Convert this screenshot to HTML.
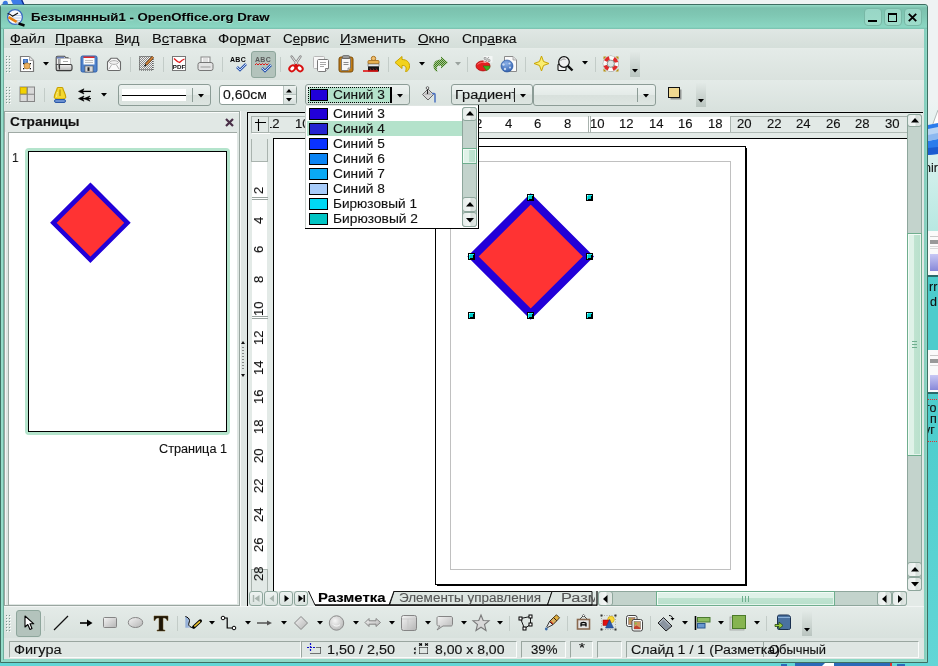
<!DOCTYPE html><html><head><meta charset="utf-8"><style>
*{margin:0;padding:0;box-sizing:border-box}
html,body{width:938px;height:666px;overflow:hidden;background:#eef3f3;font-family:"Liberation Sans",sans-serif}
.a{position:absolute}
.t{position:absolute;white-space:pre;transform-origin:0 0;will-change:transform;-webkit-text-stroke:0.12px currentColor}
u{text-decoration:underline;text-underline-offset:1px}
svg{position:absolute;overflow:visible;will-change:transform}
</style></head><body><div class="a" style="left:0px;top:0px;width:938px;height:666px;background:#eef3f3"></div><div class="a" style="left:0px;top:662px;width:938px;height:4px;background:#62d6d6"></div><div class="a" style="left:928px;top:0px;width:10px;height:666px;background:linear-gradient(#eef3f3 0,#eef3f3 100px,#d6f0ec 160px,#b8e8e2 230px,#5cd4d0 280px,#5ad4d2 666px)"></div><div class="a" style="left:0px;top:4px;width:928px;height:659px;background:#8ed8c6;border:1px solid #3f6e62;border-radius:3px 3px 0 0"></div><div class="a" style="left:1px;top:5px;width:2px;height:657px;background:#94dcc9"></div><div class="a" style="left:3px;top:28px;width:1px;height:632px;background:#6fae9e"></div><div class="a" style="left:924px;top:28px;width:2px;height:632px;background:#86cfbe"></div><div class="a" style="left:1px;top:5px;width:926px;height:24px;background:linear-gradient(#96dbc7 0,#7bc1ae 3px,#7fc7b3 10px,#8ad6c2 22px,#78c0ad 24px);border-radius:3px 3px 0 0"></div><div class="a" style="left:4px;top:29px;width:920px;height:630px;background:#dde5e1"></div><div class="a" style="left:4px;top:29px;width:920px;height:20px;background:linear-gradient(#e0e7e4,#d4ded9)"></div><div class="a" style="left:4px;top:48px;width:920px;height:1px;background:#e6ece9"></div><div class="a" style="left:4px;top:49px;width:920px;height:31px;background:linear-gradient(#e4ebe8,#dae2de)"></div><div class="a" style="left:4px;top:80px;width:920px;height:31px;background:linear-gradient(#e4ebe8,#d8e1dd)"></div><div class="a" style="left:4px;top:111px;width:920px;height:496px;background:#dfe6e3"></div><div class="a" style="left:4px;top:111px;width:236px;height:1px;background:#9aa6a0"></div><div class="a" style="left:4px;top:112px;width:236px;height:1px;background:#fafcfb"></div><div class="a" style="left:4px;top:111px;width:1px;height:495px;background:#9aa6a0"></div><div class="a" style="left:5px;top:112px;width:1px;height:494px;background:#f4f7f6"></div><div class="a" style="left:5px;top:113px;width:234px;height:19px;background:#e1e8e5"></div><div class="a" style="left:8px;top:132px;width:229px;height:1px;background:#a0aaa5"></div><div class="a" style="left:8px;top:132px;width:1px;height:474px;background:#a0aaa5"></div><div class="a" style="left:9px;top:133px;width:228px;height:471px;background:#fff"></div><div class="a" style="left:4px;top:605px;width:236px;height:1px;background:#9aa6a0"></div><div class="a" style="left:239px;top:111px;width:1px;height:496px;background:#9aa6a0"></div><div class="a" style="left:240px;top:111px;width:1px;height:496px;background:#f8faf9"></div><div class="a" style="left:247px;top:112px;width:676px;height:1px;background:#000"></div><div class="a" style="left:247px;top:112px;width:1px;height:495px;background:#000"></div><div class="a" style="left:248px;top:113px;width:675px;height:493px;background:#e3eae7"></div><div class="a" style="left:251px;top:116px;width:18px;height:17px;background:#e2e9e6;border:1px solid #a9b3ae;box-shadow:1px 1px 0 #fff"></div><svg style="left:252px;top:117px;" width="16" height="15" viewBox="0 0 16 15"><path d="M6.5 2V14M3 5.5H14" stroke="#000" stroke-width="1.1"/></svg><div class="a" style="left:269px;top:116px;width:638px;height:17px;background:#e2e9e6;border-top:1px solid #b0bab5;border-bottom:1px solid #fff"></div><div class="a" style="left:450px;top:116px;width:280px;height:1px;background:#e3eae7"></div><div class="a" style="left:450px;top:117px;width:280px;height:15px;background:#fff"></div><div class="a" style="left:730px;top:116px;width:177px;height:17px;background:#e2e9e6;border-top:1px solid #a9b3ae;border-left:1px solid #a9b3ae"></div><div class="a" style="left:269px;top:132px;width:638px;height:1px;background:#b0bab5"></div><div class="a" style="left:252px;top:161px;width:15px;height:408px;background:#fff"></div><div class="a" style="left:251px;top:139px;width:17px;height:23px;background:#e2e9e6;border:1px solid #a9b3ae;border-top:0"></div><div class="a" style="left:273px;top:138px;width:634px;height:1px;background:#000"></div><div class="a" style="left:273px;top:138px;width:1px;height:453px;background:#000"></div><div class="a" style="left:274px;top:139px;width:633px;height:452px;background:#fff"></div><div class="a" style="left:4px;top:606px;width:920px;height:1px;background:#f2f5f4"></div><div class="a" style="left:4px;top:607px;width:920px;height:31px;background:linear-gradient(#e4ebe8,#d8e1dd)"></div><div class="a" style="left:4px;top:638px;width:920px;height:21px;background:#dfe6e3"></div><span class="t" style="left:31px;top:12px;font-size:11.5px;line-height:11.5px;font-weight:700;color:#050505;transform:scaleX(1.1475);text-shadow:0 1px 1px rgba(220,255,245,.55)">Безымянный1 - OpenOffice.org Draw</span><span class="t" style="left:9.8px;top:33px;font-size:12.5px;line-height:12.5px;font-weight:400;color:#0d0d0d;transform:scaleX(1.1388);"><u>Ф</u>айл</span><span class="t" style="left:55.4px;top:33px;font-size:12.5px;line-height:12.5px;font-weight:400;color:#0d0d0d;transform:scaleX(1.1270);"><u>П</u>равка</span><span class="t" style="left:115.2px;top:33px;font-size:12.5px;line-height:12.5px;font-weight:400;color:#0d0d0d;transform:scaleX(1.0785);"><u>В</u>ид</span><span class="t" style="left:151.6px;top:33px;font-size:12.5px;line-height:12.5px;font-weight:400;color:#0d0d0d;transform:scaleX(1.1707);">В<u>с</u>тавка</span><span class="t" style="left:217.9px;top:33px;font-size:12.5px;line-height:12.5px;font-weight:400;color:#0d0d0d;transform:scaleX(1.1868);">Фо<u>р</u>мат</span><span class="t" style="left:282.7px;top:33px;font-size:12.5px;line-height:12.5px;font-weight:400;color:#0d0d0d;transform:scaleX(1.0791);">С<u>е</u>рвис</span><span class="t" style="left:340.2px;top:33px;font-size:12.5px;line-height:12.5px;font-weight:400;color:#0d0d0d;transform:scaleX(1.1704);"><u>И</u>зменить</span><span class="t" style="left:418.0px;top:33px;font-size:12.5px;line-height:12.5px;font-weight:400;color:#0d0d0d;transform:scaleX(1.0879);"><u>О</u>кно</span><span class="t" style="left:461.9px;top:33px;font-size:12.5px;line-height:12.5px;font-weight:400;color:#0d0d0d;transform:scaleX(1.1112);">Спр<u>а</u>вка</span><svg style="left:6px;top:8px;" width="18" height="18" viewBox="0 0 18 18"><circle cx="9" cy="9" r="7.4" fill="#f6f9fd" stroke="#3b6cc2" stroke-width="1.3"/>
<path d="M5 7.5H15M5 10H15M6 12.5H14" stroke="#b8cde8" stroke-width="1"/>
<path d="M1.6 5.5C3.5 5.5 5 6.8 6.5 8.2L12 5" stroke="#111" fill="none" stroke-width="1.1"/>
<path d="M2.5 9.2L11 14.2" stroke="#e8820e" stroke-width="2.6"/>
<path d="M10.5 14L13 15.5" stroke="#d0d0d0" stroke-width="2.6"/>
<path d="M12.5 15.6L18.5 17.4" stroke="#050505" stroke-width="2.6"/></svg><div class="a" style="left:863.5px;top:8px;width:18px;height:18px;background:linear-gradient(#98d6c6,#9edcca);border:1px solid #78b8a6;border-radius:4px"></div><div class="a" style="left:883.5px;top:8px;width:18px;height:18px;background:linear-gradient(#98d6c6,#9edcca);border:1px solid #78b8a6;border-radius:4px"></div><div class="a" style="left:903.5px;top:8px;width:18px;height:18px;background:linear-gradient(#98d6c6,#9edcca);border:1px solid #78b8a6;border-radius:4px"></div><div class="a" style="left:868px;top:20px;width:9px;height:2px;background:#000"></div><div class="a" style="left:888px;top:13px;width:9px;height:9px;border:1px solid #000;border-top-width:2px"></div><svg style="left:908px;top:13px;" width="9" height="9" viewBox="0 0 9 9"><path d="M0.8 0.8L8.2 8.2M8.2 0.8L0.8 8.2" stroke="#000" stroke-width="1.9"/></svg><div class="a" style="left:6px;top:56px;width:1px;height:1px;background:#7d958d"></div><div class="a" style="left:7px;top:57px;width:1px;height:1px;background:#fbfdfc"></div><div class="a" style="left:9px;top:56px;width:1px;height:1px;background:#7d958d"></div><div class="a" style="left:10px;top:57px;width:1px;height:1px;background:#fbfdfc"></div><div class="a" style="left:6px;top:59px;width:1px;height:1px;background:#7d958d"></div><div class="a" style="left:7px;top:60px;width:1px;height:1px;background:#fbfdfc"></div><div class="a" style="left:9px;top:59px;width:1px;height:1px;background:#7d958d"></div><div class="a" style="left:10px;top:60px;width:1px;height:1px;background:#fbfdfc"></div><div class="a" style="left:6px;top:62px;width:1px;height:1px;background:#7d958d"></div><div class="a" style="left:7px;top:63px;width:1px;height:1px;background:#fbfdfc"></div><div class="a" style="left:9px;top:62px;width:1px;height:1px;background:#7d958d"></div><div class="a" style="left:10px;top:63px;width:1px;height:1px;background:#fbfdfc"></div><div class="a" style="left:6px;top:65px;width:1px;height:1px;background:#7d958d"></div><div class="a" style="left:7px;top:66px;width:1px;height:1px;background:#fbfdfc"></div><div class="a" style="left:9px;top:65px;width:1px;height:1px;background:#7d958d"></div><div class="a" style="left:10px;top:66px;width:1px;height:1px;background:#fbfdfc"></div><div class="a" style="left:6px;top:68px;width:1px;height:1px;background:#7d958d"></div><div class="a" style="left:7px;top:69px;width:1px;height:1px;background:#fbfdfc"></div><div class="a" style="left:9px;top:68px;width:1px;height:1px;background:#7d958d"></div><div class="a" style="left:10px;top:69px;width:1px;height:1px;background:#fbfdfc"></div><div class="a" style="left:6px;top:71px;width:1px;height:1px;background:#7d958d"></div><div class="a" style="left:7px;top:72px;width:1px;height:1px;background:#fbfdfc"></div><div class="a" style="left:9px;top:71px;width:1px;height:1px;background:#7d958d"></div><div class="a" style="left:10px;top:72px;width:1px;height:1px;background:#fbfdfc"></div><svg style="left:19px;top:55px;" width="16" height="18" viewBox="0 0 16 18"><path d="M1.5 1.5H10.5L14.5 5.5V16.5H1.5Z" fill="#fff" stroke="#7a7a7a" stroke-width="1.2"/>
<path d="M10.5 1.5V5.5H14.5" fill="#e4e4e4" stroke="#a8a8a8"/>
<rect x="4" y="4" width="5" height="4.7" fill="#3f74c4"/><path d="M5 5.5H8M5 7H8M6.5 4.5V8.5" stroke="#7aa0dc" stroke-width=".6"/>
<circle cx="8" cy="10.9" r="3" fill="#eab060" stroke="#b07820" stroke-width=".7"/>
<rect x="4" y="8" width="1.3" height="1.3" fill="#111"/><rect x="10.7" y="8" width="1.3" height="1.3" fill="#111"/><rect x="4" y="13" width="1.3" height="1.3" fill="#111"/><rect x="10.7" y="13" width="1.3" height="1.3" fill="#111"/></svg><svg style="left:43px;top:62px;" width="6" height="4" viewBox="0 0 6 4"><path d="M0 0H6L3 3.5Z" fill="#000"/></svg><svg style="left:55px;top:55px;" width="18" height="17" viewBox="0 0 18 17"><defs><linearGradient id="gd" x1="0" y1="0" x2="0" y2="1"><stop offset="0" stop-color="#f4f4f4"/><stop offset="1" stop-color="#b4b4b4"/></linearGradient></defs>
<path d="M2.6 1.2H9.5L11 2.8H13V9.5H1.2V2.6C1.2 1.8 1.8 1.2 2.6 1.2Z" fill="#f0f0f0" stroke="#4a4a4a" stroke-width="1.1"/>
<rect x="1.8" y="1.8" width="7.5" height="1.8" fill="#6a80b8"/>
<rect x="3.3" y="4" width="1.3" height="11" fill="#7a7a7a"/>
<rect x="5.5" y="3.5" width="10" height="6" fill="#fff" stroke="#aaa" stroke-width=".6"/><path d="M8 6.5H13" stroke="#aaa"/>
<path d="M1.2 9.5V14.2C1.2 15 1.8 15.6 2.6 15.6H15.5C16.5 15.6 17 15 17 14V11C17 10.2 16.5 9.5 15.5 9.5H4.5V14.5" fill="url(#gd)" stroke="#3a3a3a" stroke-width="1.1"/></svg><svg style="left:80px;top:55px;" width="18" height="18" viewBox="0 0 18 18"><rect x="1" y="1" width="16" height="16" rx="1.5" fill="#4f82cc" stroke="#2f5fa8"/>
<rect x="3.5" y="1.5" width="11" height="1.6" fill="#e02828"/>
<rect x="3.5" y="3" width="11" height="6.5" fill="#fafafa"/>
<path d="M5 5.5H13M5 7.5H13" stroke="#c0c0c0"/>
<rect x="5" y="11" width="8" height="6" fill="#d8d8d8" stroke="#555" stroke-width=".6"/>
<rect x="7.5" y="12.3" width="2" height="3.6" fill="#222"/></svg><svg style="left:106px;top:56px;" width="16" height="16" viewBox="0 0 16 16"><path d="M1.5 6L5 2.3H11L14.5 6V13.3C14.5 14 14 14.5 13.3 14.5H2.7C2 14.5 1.5 14 1.5 13.3Z" fill="#fafafa" stroke="#6a6a6a" stroke-width="1.1"/>
<path d="M3.5 6.5C4.5 4 11.5 4 12.5 6.5C11.5 9 4.5 9 3.5 6.5Z" fill="#f0f0f0" stroke="#9a9a9a" stroke-width=".8"/>
<path d="M3 13L5.5 9M13 13L10.5 9" stroke="#9a9a9a" stroke-width=".8"/></svg><div class="a" style="left:130px;top:57px;width:1px;height:15px;background:#c3ccc8"></div><svg style="left:138px;top:55px;" width="17" height="17" viewBox="0 0 17 17"><defs><pattern id="chk" width="2" height="2" patternUnits="userSpaceOnUse"><rect width="2" height="2" fill="#f0f0f0"/><rect width="1" height="1" fill="#8a8a8a"/><rect x="1" y="1" width="1" height="1" fill="#8a8a8a"/></pattern></defs>
<rect x="1.5" y="1.5" width="13.5" height="13.5" fill="url(#chk)" stroke="#333" stroke-width="1" stroke-dasharray="1 1"/>
<path d="M15 2L8 9.5" stroke="#6a3a10" stroke-width="2.6"/><path d="M15 2L8 9.5" stroke="#d88a40" stroke-width="1.4"/><path d="M8 9.5L6.5 11.2" stroke="#111" stroke-width="1.4"/></svg><div class="a" style="left:163px;top:57px;width:1px;height:15px;background:#c3ccc8"></div><svg style="left:171px;top:55px;" width="16" height="17" viewBox="0 0 16 17"><rect x="1.5" y="1.5" width="13" height="14" fill="#fff" stroke="#777"/>
<path d="M3 3.5C5 5.5 7 7 8.5 7.5C10 6 12 4.5 13.5 4" stroke="#e01818" stroke-width="1.3" fill="none"/>
<text x="8" y="14.2" font-family="Liberation Sans" font-size="6.2" font-weight="700" text-anchor="middle" fill="#111">PDF</text></svg><svg style="left:197px;top:56px;" width="17" height="16" viewBox="0 0 17 16"><rect x="4" y="1" width="9" height="6" fill="#fafafa" stroke="#888"/>
<path d="M6 3H11M6 5H11" stroke="#bbb" stroke-width=".8"/>
<rect x="1" y="6.5" width="15" height="8" rx="2" fill="#e4e4e4" stroke="#777"/>
<path d="M3.5 11H13.5" stroke="#999"/></svg><div class="a" style="left:222px;top:57px;width:1px;height:15px;background:#c3ccc8"></div><svg style="left:229px;top:56px;" width="18" height="16" viewBox="0 0 18 16"><text x="1" y="6.2" font-family="Liberation Sans" font-size="7" font-weight="700" fill="#050505" letter-spacing=".3">ABC</text>
<path d="M8 11L11 14L17 8" stroke="#2d58b0" stroke-width="2.6" fill="none"/><path d="M8 11L11 14L17 8" stroke="#c8d8f4" stroke-width="1" fill="none"/></svg><div class="a" style="left:251px;top:51px;width:25px;height:27px;background:#b3c3bc;border:1px solid #8ea69c;border-radius:3px"></div><svg style="left:254px;top:56px;" width="18" height="17" viewBox="0 0 18 17"><text x="1" y="6.2" font-family="Liberation Sans" font-size="7" font-weight="700" fill="#5a5a5a" letter-spacing=".3">ABC</text>
<path d="M1 9L2.5 7.5L4 9L5.5 7.5L7 9L8.5 7.5L10 9L11.5 7.5L13 9L14.5 7.5" stroke="#e01818" stroke-width="1" fill="none"/>
<path d="M8 12L11 15L17 9" stroke="#2d58b0" stroke-width="2.6" fill="none"/><path d="M8 12L11 15L17 9" stroke="#c8d8f4" stroke-width="1" fill="none"/></svg><div class="a" style="left:280px;top:57px;width:1px;height:15px;background:#c3ccc8"></div><svg style="left:288px;top:55px;" width="16" height="17" viewBox="0 0 16 17"><path d="M3.6 1.5L9.5 9.5M12.5 1.5L7 9.5" stroke="#888" stroke-width="2.4" stroke-linecap="round"/><path d="M3.6 1.5L9.5 9.5M12.5 1.5L7 9.5" stroke="#f4f4f4" stroke-width=".9"/>
<ellipse cx="4.3" cy="13.3" rx="3.3" ry="2.6" fill="#fff" stroke="#d81010" stroke-width="1.9" transform="rotate(-45 4.3 13.3)"/>
<ellipse cx="11.7" cy="13.3" rx="3.3" ry="2.6" fill="#fff" stroke="#d81010" stroke-width="1.9" transform="rotate(45 11.7 13.3)"/>
<circle cx="8" cy="10" r="1.2" fill="#d81010"/></svg><svg style="left:312px;top:55px;" width="18" height="18" viewBox="0 0 18 18"><rect x="1.5" y="1.5" width="11" height="12" rx="1" fill="#f8f8f8" stroke="#b8b8b8"/>
<path d="M6.5 4.5H15.5C16 4.5 16.5 5 16.5 5.5V13.5L13.5 16.5H6.5C6 16.5 5.5 16 5.5 15.5V5.5C5.5 5 6 4.5 6.5 4.5Z" fill="#fff" stroke="#7a7a7a"/>
<path d="M8 7.5H14M8 9.5H14M8 11.5H12" stroke="#a8a8a8"/>
<path d="M13.5 16.5V13.5H16.5" fill="#e8e8e8" stroke="#7a7a7a"/></svg><svg style="left:338px;top:55px;" width="16" height="18" viewBox="0 0 16 18"><rect x="1" y="2" width="14" height="15" rx="2" fill="#c07c14" stroke="#7a4a08" stroke-width="1"/>
<path d="M3.5 3.5H12.5V13L10 15.5H3.5Z" fill="#f6f6f6" stroke="#6a6a6a" stroke-width=".8"/>
<path d="M5.5 7.5H10.5M5.5 9.5H10.5" stroke="#8a8a8a"/>
<path d="M10 15.5V13H12.5" fill="#d8d8d8" stroke="#6a6a6a" stroke-width=".6"/>
<rect x="4.5" y="0.5" width="7" height="3" rx="1.2" fill="#9a9a9a" stroke="#5a5a5a" stroke-width=".7"/></svg><svg style="left:362px;top:55px;" width="18" height="18" viewBox="0 0 18 18"><circle cx="11.5" cy="3.5" r="2.2" fill="#f0c070" stroke="#a87020" stroke-width="1"/>
<rect x="6" y="5.5" width="11" height="3.5" rx="1" fill="#e8b050" stroke="#a87020" stroke-width=".9"/>
<rect x="6" y="9" width="11" height="2.5" fill="#e8e8e8" stroke="#555" stroke-width=".5"/>
<rect x="6" y="11.5" width="11" height="5" fill="#151515"/>
<path d="M1 16H16" stroke="#e01010" stroke-width="1.6"/><path d="M8 13.5L9 15M11 13.5L12 15M14 13.5L15 15" stroke="#c83030" stroke-width=".7"/></svg><div class="a" style="left:388px;top:57px;width:1px;height:15px;background:#c3ccc8"></div><svg style="left:394px;top:55px;" width="18" height="18" viewBox="0 0 18 18"><path d="M1 7.5L8 1.5V4.5C13 4.5 16 7.5 15.5 12C15 15 13 17 11.5 16.5C13 13 12 10 8 10.5V13.5Z" fill="#f2d21c" stroke="#c8a200" stroke-width="1"/></svg><svg style="left:419px;top:62px;" width="6" height="4" viewBox="0 0 6 4"><path d="M0 0H6L3 3.5Z" fill="#000"/></svg><svg style="left:431px;top:55px;" width="18" height="18" viewBox="0 0 18 18"><defs><pattern id="hg" width="2" height="2" patternUnits="userSpaceOnUse"><rect width="2" height="2" fill="#a8c890"/><rect width="1" height="1" fill="#3e7a1e"/><rect x="1" y="1" width="1" height="1" fill="#3e7a1e"/></pattern></defs>
<path d="M17 7.5L10 1.5V4.5C5 4.5 2 7.5 2.5 12C3 15 5 17 6.5 16.5C5 13 6 10 10 10.5V13.5Z" fill="url(#hg)"/></svg><svg style="left:455px;top:62px;" width="6" height="4" viewBox="0 0 6 4"><path d="M0 0H6L3 3.5Z" fill="#9aa29e"/></svg><div class="a" style="left:467px;top:57px;width:1px;height:15px;background:#c3ccc8"></div><svg style="left:474px;top:55px;" width="20" height="18" viewBox="0 0 20 18"><ellipse cx="9" cy="10.9" rx="7" ry="5" fill="#e42020" stroke="#b00808" stroke-width=".8"/>
<path d="M9 10.9L16 10.9C16 13 15 14.5 12.5 15.6Z" fill="#40b020" stroke="#207010" stroke-width=".5"/>
<path d="M3.5 9.5C5 7.5 9 7 12 7.5" stroke="#ff8080" stroke-width=".8" fill="none"/>
<rect x="9.5" y="1" width="9" height="6.5" fill="#fff" opacity=".6"/>
<text x="9.6" y="7.2" font-family="Liberation Sans" font-size="8" font-weight="700" fill="#8a8a8a">%</text></svg><svg style="left:500px;top:55px;" width="18" height="18" viewBox="0 0 18 18"><path d="M4.5 1.5H13L16.5 5V16.5H4.5Z" fill="#fafafa" stroke="#8a8a8a"/>
<path d="M13 1.5V5H16.5" fill="#e0e0e0" stroke="#a0a0a0" stroke-width=".8"/>
<defs><radialGradient id="gl" cx=".45" cy=".3" r=".8"><stop offset="0" stop-color="#8ab0e8"/><stop offset="1" stop-color="#2858a8"/></radialGradient></defs>
<circle cx="7" cy="11" r="6" fill="url(#gl)" stroke="#2050a0" stroke-width=".6"/>
<circle cx="3.5" cy="9.5" r="1.2" fill="#c8daf2"/><circle cx="9.5" cy="8.5" r="1.1" fill="#c8daf2"/><circle cx="10" cy="12.5" r="1" fill="#c8daf2"/><circle cx="5" cy="14" r="1.2" fill="#c8daf2"/></svg><div class="a" style="left:525px;top:57px;width:1px;height:15px;background:#c3ccc8"></div><svg style="left:533px;top:55px;" width="17" height="17" viewBox="0 0 17 17"><path d="M8.5 1L10.5 6.5L16 8.5L10.5 10.5L8.5 16L6.5 10.5L1 8.5L6.5 6.5Z" fill="#fbee70" stroke="#c8a400" stroke-width="1"/></svg><svg style="left:556px;top:55px;" width="20" height="18" viewBox="0 0 20 18"><rect x="2" y="9" width="8" height="6.5" rx="1" fill="#f4f4f4" stroke="#111" stroke-width="1.1"/>
<circle cx="8" cy="7" r="5.3" fill="#f0f0f0" stroke="#111" stroke-width="1.2"/>
<path d="M4.5 6C5.5 4 8 3.5 9.5 4.5" stroke="#999" fill="none"/>
<path d="M11.8 10.8L16.5 15.5" stroke="#111" stroke-width="2.4"/></svg><svg style="left:582px;top:61px;" width="6" height="4" viewBox="0 0 6 4"><path d="M0 0H6L3 3.5Z" fill="#000"/></svg><div class="a" style="left:595px;top:57px;width:1px;height:15px;background:#c3ccc8"></div><svg style="left:602px;top:55px;" width="18" height="18" viewBox="0 0 18 18"><path d="M1.5 1.5H4.5L1.5 4.5Z M16.5 1.5H13.5L16.5 4.5Z M1.5 16.5H4.5L1.5 13.5Z M16.5 16.5H13.5L16.5 13.5Z" fill="#b89010"/>
<circle cx="8.8" cy="8.7" r="7.6" fill="none" stroke="#8a8a8a" stroke-width=".9"/>
<circle cx="8.8" cy="8.7" r="5.7" fill="none" stroke="#fafafa" stroke-width="3.8"/>
<circle cx="8.8" cy="8.7" r="5.7" fill="none" stroke="#e02a2a" stroke-width="3.8" stroke-dasharray="4.48 4.48" stroke-dashoffset="-2.24"/>
<circle cx="8.8" cy="8.7" r="3.6" fill="#dfe6e3" stroke="#7a7a7a" stroke-width=".8"/></svg><div class="a" style="left:630px;top:52px;width:10px;height:25px;background:linear-gradient(#e2e9e6,#b9c4bf)"></div><svg style="left:632px;top:69px;" width="6" height="4" viewBox="0 0 6 4"><path d="M0 0H6L3 3.5Z" fill="#000"/></svg><div class="a" style="left:6px;top:87px;width:1px;height:1px;background:#7d958d"></div><div class="a" style="left:7px;top:88px;width:1px;height:1px;background:#fbfdfc"></div><div class="a" style="left:9px;top:87px;width:1px;height:1px;background:#7d958d"></div><div class="a" style="left:10px;top:88px;width:1px;height:1px;background:#fbfdfc"></div><div class="a" style="left:6px;top:90px;width:1px;height:1px;background:#7d958d"></div><div class="a" style="left:7px;top:91px;width:1px;height:1px;background:#fbfdfc"></div><div class="a" style="left:9px;top:90px;width:1px;height:1px;background:#7d958d"></div><div class="a" style="left:10px;top:91px;width:1px;height:1px;background:#fbfdfc"></div><div class="a" style="left:6px;top:93px;width:1px;height:1px;background:#7d958d"></div><div class="a" style="left:7px;top:94px;width:1px;height:1px;background:#fbfdfc"></div><div class="a" style="left:9px;top:93px;width:1px;height:1px;background:#7d958d"></div><div class="a" style="left:10px;top:94px;width:1px;height:1px;background:#fbfdfc"></div><div class="a" style="left:6px;top:96px;width:1px;height:1px;background:#7d958d"></div><div class="a" style="left:7px;top:97px;width:1px;height:1px;background:#fbfdfc"></div><div class="a" style="left:9px;top:96px;width:1px;height:1px;background:#7d958d"></div><div class="a" style="left:10px;top:97px;width:1px;height:1px;background:#fbfdfc"></div><div class="a" style="left:6px;top:99px;width:1px;height:1px;background:#7d958d"></div><div class="a" style="left:7px;top:100px;width:1px;height:1px;background:#fbfdfc"></div><div class="a" style="left:9px;top:99px;width:1px;height:1px;background:#7d958d"></div><div class="a" style="left:10px;top:100px;width:1px;height:1px;background:#fbfdfc"></div><div class="a" style="left:6px;top:102px;width:1px;height:1px;background:#7d958d"></div><div class="a" style="left:7px;top:103px;width:1px;height:1px;background:#fbfdfc"></div><div class="a" style="left:9px;top:102px;width:1px;height:1px;background:#7d958d"></div><div class="a" style="left:10px;top:103px;width:1px;height:1px;background:#fbfdfc"></div><svg style="left:19px;top:86px;" width="17" height="17" viewBox="0 0 17 17"><rect x="1" y="1" width="14.5" height="14.5" fill="#d9d9d9" stroke="#858585"/>
<rect x="1.5" y="1.5" width="6.5" height="6.5" fill="#f2d200" stroke="#d4b000"/>
<path d="M8.25 1V15.5M1 8.25H15.5" stroke="#858585" stroke-width="1.2"/></svg><div class="a" style="left:44px;top:88px;width:1px;height:14px;background:#c3ccc8"></div><svg style="left:53px;top:86px;" width="15" height="18" viewBox="0 0 15 18"><path d="M5 1.5H9C9.8 1.5 10 2.5 10 3C11 6 13 9 12.8 11.5C12.5 13.5 1.5 13.5 1.2 11.5C1 9 3 6 4 3C4 2.5 4.2 1.5 5 1.5Z" fill="#f4d830" stroke="#c8a000" stroke-width="1.1"/>
<path d="M7 3.5V10" stroke="#a88000" stroke-width="1"/><path d="M4.5 6C4 8 3.5 10 3.5 11" stroke="#fff4a0" stroke-width=".8"/>
<rect x="1.5" y="13.5" width="11" height="3" rx="1.5" fill="#6a90d0" stroke="#2a58a8" stroke-width="1"/></svg><svg style="left:78px;top:88px;" width="14" height="14" viewBox="0 0 14 14"><path d="M3 3.4H13" stroke="#000" stroke-width="1.3"/><path d="M0.5 3.4L6 0.8L4.5 3.4L6 6Z" fill="#000" stroke="#000" stroke-width=".6"/>
<path d="M2 10.6H13" stroke="#000" stroke-width="1.3"/><path d="M0.5 10.6L6 8L4.5 10.6L6 13.2Z M6 10.6L12 8L10 10.6L12 13.2Z" fill="#000" stroke="#000" stroke-width=".6"/></svg><svg style="left:101px;top:93px;" width="6" height="4" viewBox="0 0 6 4"><path d="M0 0H6L3 3.5Z" fill="#000"/></svg><div class="a" style="left:118px;top:84px;width:93px;height:22px;background:linear-gradient(#edf2f0 0,#e4ebe8 48%,#d8e0dc 52%,#dde5e1 100%);border:1px solid #8c9c96;border-radius:3px"></div><div class="a" style="left:122px;top:89px;width:64px;height:12px;background:#fff"></div><div class="a" style="left:122px;top:95px;width:64px;height:1px;background:#000"></div><div class="a" style="left:192px;top:88px;width:1px;height:14px;background:#8c9c96"></div><svg style="left:198px;top:94px;" width="6" height="4" viewBox="0 0 6 4"><path d="M0 0H6L3 3.5Z" fill="#000"/></svg><div class="a" style="left:219px;top:85px;width:78px;height:20px;background:#fff;border:1px solid #8c9c96;border-radius:3px"></div><div class="a" style="left:283px;top:86px;width:13px;height:9px;background:linear-gradient(#eef3f1,#d5dedb);border-left:1px solid #b8c4bf;border-bottom:1px solid #b8c4bf"></div><div class="a" style="left:283px;top:95px;width:13px;height:9px;background:linear-gradient(#eef3f1,#d5dedb);border-left:1px solid #b8c4bf"></div><svg style="left:286px;top:89px;" width="6" height="4" viewBox="0 0 6 4"><path d="M0 3.5H6L3 0Z" fill="#000"/></svg><svg style="left:286px;top:98px;" width="6" height="4" viewBox="0 0 6 4"><path d="M0 0H6L3 3.5Z" fill="#000"/></svg><span class="t" style="left:223px;top:89px;font-size:12.5px;line-height:12.5px;font-weight:400;color:#111;transform:scaleX(1.1228);">0,60см</span><div class="a" style="left:305px;top:84px;width:105px;height:21px;background:linear-gradient(#edf2f0 0,#e4ebe8 48%,#d8e0dc 52%,#dde5e1 100%);border:1px solid #8c9c96;border-radius:3px"></div><div class="a" style="left:308px;top:87px;width:83px;height:16px;background:#b4e2cb;outline:1px dotted #000;outline-offset:-1px"></div><div class="a" style="left:390px;top:87px;width:1.5px;height:16px;background:#000"></div><div class="a" style="left:309.5px;top:89px;width:18.5px;height:12px;background:#2000d8;border:1px solid #000"></div><span class="t" style="left:333px;top:89px;font-size:12.5px;line-height:12.5px;font-weight:400;color:#111;transform:scaleX(1.0991);">Синий 3</span><svg style="left:397px;top:94px;" width="6" height="4" viewBox="0 0 6 4"><path d="M0 0H6L3 3.5Z" fill="#000"/></svg><svg style="left:421px;top:86px;" width="16" height="18" viewBox="0 0 16 18"><path d="M1.5 8.5L7 3L12.5 8.5L7 14Z" fill="#d8d8d8" stroke="#666"/>
<path d="M3 9L7 5L11 9" fill="#b8b8b8"/>
<path d="M6.5 1.5V8" stroke="#222" stroke-width="1"/><circle cx="6.5" cy="2" r="1.3" fill="#fff" stroke="#444" stroke-width=".8"/>
<path d="M11 7.5H13C13.6 7.5 14 8 14 8.5V16.5" stroke="#4a70c0" stroke-width="1.5" fill="none"/></svg><div class="a" style="left:451px;top:84px;width:82px;height:21px;background:linear-gradient(#edf2f0 0,#e4ebe8 48%,#d8e0dc 52%,#dde5e1 100%);border:1px solid #8c9c96;border-radius:3px"></div><div class="a" style="left:452px;top:85px;width:62px;height:19px;overflow:hidden"><div class="a" style="left:-452px;top:-85px;width:938px;height:200px"><span class="t" style="left:455px;top:89px;font-size:12.5px;line-height:12.5px;font-weight:400;color:#111;transform:scaleX(1.1704);">Градиент</span></div></div><div class="a" style="left:514px;top:88px;width:1px;height:14px;background:#222"></div><svg style="left:520px;top:94px;" width="6" height="4" viewBox="0 0 6 4"><path d="M0 0H6L3 3.5Z" fill="#000"/></svg><div class="a" style="left:533px;top:84px;width:123px;height:22px;background:linear-gradient(#edf2f0 0,#e4ebe8 48%,#d8e0dc 52%,#dde5e1 100%);border:1px solid #8c9c96;border-radius:3px"></div><div class="a" style="left:637px;top:88px;width:1px;height:14px;background:#8c9c96"></div><svg style="left:643px;top:94px;" width="6" height="4" viewBox="0 0 6 4"><path d="M0 0H6L3 3.5Z" fill="#000"/></svg><svg style="left:667px;top:86px;" width="16" height="15" viewBox="0 0 16 15"><rect x="3.5" y="3.5" width="11" height="10" fill="#555" opacity=".55"/>
<rect x="1.5" y="1.5" width="11" height="10" fill="#f0d890" stroke="#111"/></svg><div class="a" style="left:696px;top:83px;width:10px;height:24px;background:linear-gradient(#e2e9e6,#b9c4bf)"></div><svg style="left:698px;top:99px;" width="6" height="4" viewBox="0 0 6 4"><path d="M0 0H6L3 3.5Z" fill="#000"/></svg><span class="t" style="left:9.5px;top:116px;font-size:12.5px;line-height:12.5px;font-weight:700;color:#111;transform:scaleX(1.0972);">Страницы</span><svg style="left:225px;top:118px;" width="9" height="9" viewBox="0 0 9 9"><path d="M1 1L8 8M8 1L1 8" stroke="#4a3048" stroke-width="2.2"/></svg><span class="t" style="left:12px;top:152px;font-size:12.5px;line-height:12.5px;font-weight:400;color:#111;transform:scaleX(0.9348);">1</span><div class="a" style="left:25px;top:148px;width:205px;height:287px;border:3px solid #b4e4cc;border-radius:4px"></div><div class="a" style="left:28px;top:151px;width:199px;height:281px;background:#fff;border:1px solid #000"></div><svg style="left:48px;top:180px;" width="85" height="85" viewBox="0 0 85 85"><path d="M42.4 5.75L79.45 42.8L42.4 79.85L5.35 42.8Z" fill="#ff3333" stroke="#2200d8" stroke-width="4.6" stroke-linejoin="miter"/></svg><span class="t" style="left:159px;top:443px;font-size:12px;line-height:12px;font-weight:400;color:#111;transform:scaleX(1.0558);">Страница 1</span><div class="a" style="left:270px;top:0;width:637px;height:140px;overflow:hidden"><div class="a" style="left:-270px;top:0;width:938px;height:140px"><span class="t" style="left:265.1px;top:118px;font-size:12.5px;line-height:12.5px;font-weight:400;color:#111;transform:scaleX(1.0499);">12</span><span class="t" style="left:294.6px;top:118px;font-size:12.5px;line-height:12.5px;font-weight:400;color:#111;transform:scaleX(1.0499);">10</span><span class="t" style="left:327.8px;top:118px;font-size:12.5px;line-height:12.5px;font-weight:400;color:#111;transform:scaleX(1.0499);">8</span><span class="t" style="left:357.2px;top:118px;font-size:12.5px;line-height:12.5px;font-weight:400;color:#111;transform:scaleX(1.0499);">6</span><span class="t" style="left:386.8px;top:118px;font-size:12.5px;line-height:12.5px;font-weight:400;color:#111;transform:scaleX(1.0499);">4</span><span class="t" style="left:416.2px;top:118px;font-size:12.5px;line-height:12.5px;font-weight:400;color:#111;transform:scaleX(1.0499);">2</span><span class="t" style="left:475.2px;top:118px;font-size:12.5px;line-height:12.5px;font-weight:400;color:#111;transform:scaleX(1.0499);">2</span><span class="t" style="left:504.8px;top:118px;font-size:12.5px;line-height:12.5px;font-weight:400;color:#111;transform:scaleX(1.0499);">4</span><span class="t" style="left:534.2px;top:118px;font-size:12.5px;line-height:12.5px;font-weight:400;color:#111;transform:scaleX(1.0499);">6</span><span class="t" style="left:563.8px;top:118px;font-size:12.5px;line-height:12.5px;font-weight:400;color:#111;transform:scaleX(1.0499);">8</span><span class="t" style="left:589.6px;top:118px;font-size:12.5px;line-height:12.5px;font-weight:400;color:#111;transform:scaleX(1.0499);">10</span><span class="t" style="left:619.1px;top:118px;font-size:12.5px;line-height:12.5px;font-weight:400;color:#111;transform:scaleX(1.0499);">12</span><span class="t" style="left:648.6px;top:118px;font-size:12.5px;line-height:12.5px;font-weight:400;color:#111;transform:scaleX(1.0499);">14</span><span class="t" style="left:678.1px;top:118px;font-size:12.5px;line-height:12.5px;font-weight:400;color:#111;transform:scaleX(1.0499);">16</span><span class="t" style="left:707.6px;top:118px;font-size:12.5px;line-height:12.5px;font-weight:400;color:#111;transform:scaleX(1.0499);">18</span><span class="t" style="left:737.1px;top:118px;font-size:12.5px;line-height:12.5px;font-weight:400;color:#111;transform:scaleX(1.0499);">20</span><span class="t" style="left:766.6px;top:118px;font-size:12.5px;line-height:12.5px;font-weight:400;color:#111;transform:scaleX(1.0499);">22</span><span class="t" style="left:796.1px;top:118px;font-size:12.5px;line-height:12.5px;font-weight:400;color:#111;transform:scaleX(1.0499);">24</span><span class="t" style="left:825.6px;top:118px;font-size:12.5px;line-height:12.5px;font-weight:400;color:#111;transform:scaleX(1.0499);">26</span><span class="t" style="left:855.1px;top:118px;font-size:12.5px;line-height:12.5px;font-weight:400;color:#111;transform:scaleX(1.0499);">28</span><span class="t" style="left:884.6px;top:118px;font-size:12.5px;line-height:12.5px;font-weight:400;color:#111;transform:scaleX(1.0499);">30</span></div></div><div class="a" style="left:588px;top:116px;width:1px;height:17px;background:#a8b2ad"></div><div class="a" style="left:590px;top:116px;width:1px;height:17px;background:#a8b2ad"></div><div class="a" style="left:589px;top:117px;width:1px;height:15px;background:#fff"></div><div class="a" style="left:251px;top:569px;width:17px;height:23px;background:#e2e9e6;border:1px solid #a9b3ae;border-bottom:0"></div><span class="t" style="left:252.6px;top:194.2px;font-size:12.5px;line-height:12.5px;color:#111;transform-origin:0 0;transform:rotate(-90deg) scaleX(1.050)">2</span><span class="t" style="left:252.6px;top:223.7px;font-size:12.5px;line-height:12.5px;color:#111;transform-origin:0 0;transform:rotate(-90deg) scaleX(1.050)">4</span><span class="t" style="left:252.6px;top:253.2px;font-size:12.5px;line-height:12.5px;color:#111;transform-origin:0 0;transform:rotate(-90deg) scaleX(1.050)">6</span><span class="t" style="left:252.6px;top:282.6px;font-size:12.5px;line-height:12.5px;color:#111;transform-origin:0 0;transform:rotate(-90deg) scaleX(1.050)">8</span><span class="t" style="left:252.6px;top:315.8px;font-size:12.5px;line-height:12.5px;color:#111;transform-origin:0 0;transform:rotate(-90deg) scaleX(1.050)">10</span><span class="t" style="left:252.6px;top:345.3px;font-size:12.5px;line-height:12.5px;color:#111;transform-origin:0 0;transform:rotate(-90deg) scaleX(1.050)">12</span><span class="t" style="left:252.6px;top:374.8px;font-size:12.5px;line-height:12.5px;color:#111;transform-origin:0 0;transform:rotate(-90deg) scaleX(1.050)">14</span><span class="t" style="left:252.6px;top:404.3px;font-size:12.5px;line-height:12.5px;color:#111;transform-origin:0 0;transform:rotate(-90deg) scaleX(1.050)">16</span><span class="t" style="left:252.6px;top:433.8px;font-size:12.5px;line-height:12.5px;color:#111;transform-origin:0 0;transform:rotate(-90deg) scaleX(1.050)">18</span><span class="t" style="left:252.6px;top:463.3px;font-size:12.5px;line-height:12.5px;color:#111;transform-origin:0 0;transform:rotate(-90deg) scaleX(1.050)">20</span><span class="t" style="left:252.6px;top:492.8px;font-size:12.5px;line-height:12.5px;color:#111;transform-origin:0 0;transform:rotate(-90deg) scaleX(1.050)">22</span><span class="t" style="left:252.6px;top:522.3px;font-size:12.5px;line-height:12.5px;color:#111;transform-origin:0 0;transform:rotate(-90deg) scaleX(1.050)">24</span><span class="t" style="left:252.6px;top:551.8px;font-size:12.5px;line-height:12.5px;color:#111;transform-origin:0 0;transform:rotate(-90deg) scaleX(1.050)">26</span><span class="t" style="left:252.6px;top:581.3px;font-size:12.5px;line-height:12.5px;color:#111;transform-origin:0 0;transform:rotate(-90deg) scaleX(1.050)">28</span><div class="a" style="left:252px;top:316px;width:16px;height:1px;background:#9aa4a0"></div><div class="a" style="left:252px;top:318px;width:16px;height:1px;background:#9aa4a0"></div><div class="a" style="left:252px;top:197px;width:16px;height:1px;background:#9aa4a0"></div><div class="a" style="left:252px;top:199px;width:16px;height:1px;background:#9aa4a0"></div><div class="a" style="left:435px;top:146px;width:311px;height:439px;border:1px solid #000"></div><div class="a" style="left:746px;top:148px;width:1px;height:438px;background:#000"></div><div class="a" style="left:437px;top:585px;width:310px;height:1px;background:#000"></div><div class="a" style="left:450px;top:161px;width:281px;height:409px;border:1px solid #c0c0c0"></div><svg style="left:466px;top:192px;" width="130" height="130" viewBox="0 0 130 130"><path d="M64.7 6.85L122.35 64.5L64.7 122.15L7.05 64.5Z" fill="#ff3333" stroke="#2200d8" stroke-width="8" stroke-linejoin="miter"/></svg><div class="a" style="left:468.0px;top:194.0px;width:7px;height:7px;background:#000"></div><div class="a" style="left:469.0px;top:195.0px;width:5px;height:1px;background:#18f0f0"></div><div class="a" style="left:469.0px;top:195.0px;width:1px;height:5px;background:#18f0f0"></div><div class="a" style="left:470.0px;top:196.0px;width:3px;height:3px;background:#00c8c8"></div><div class="a" style="left:469.0px;top:195.0px;width:1px;height:1px;background:#e8f8f8"></div><div class="a" style="left:468.0px;top:253.0px;width:7px;height:7px;background:#000"></div><div class="a" style="left:469.0px;top:254.0px;width:5px;height:1px;background:#18f0f0"></div><div class="a" style="left:469.0px;top:254.0px;width:1px;height:5px;background:#18f0f0"></div><div class="a" style="left:470.0px;top:255.0px;width:3px;height:3px;background:#00c8c8"></div><div class="a" style="left:469.0px;top:254.0px;width:1px;height:1px;background:#e8f8f8"></div><div class="a" style="left:468.0px;top:312.0px;width:7px;height:7px;background:#000"></div><div class="a" style="left:469.0px;top:313.0px;width:5px;height:1px;background:#18f0f0"></div><div class="a" style="left:469.0px;top:313.0px;width:1px;height:5px;background:#18f0f0"></div><div class="a" style="left:470.0px;top:314.0px;width:3px;height:3px;background:#00c8c8"></div><div class="a" style="left:469.0px;top:313.0px;width:1px;height:1px;background:#e8f8f8"></div><div class="a" style="left:527.0px;top:194.0px;width:7px;height:7px;background:#000"></div><div class="a" style="left:528.0px;top:195.0px;width:5px;height:1px;background:#18f0f0"></div><div class="a" style="left:528.0px;top:195.0px;width:1px;height:5px;background:#18f0f0"></div><div class="a" style="left:529.0px;top:196.0px;width:3px;height:3px;background:#00c8c8"></div><div class="a" style="left:528.0px;top:195.0px;width:1px;height:1px;background:#e8f8f8"></div><div class="a" style="left:527.0px;top:312.0px;width:7px;height:7px;background:#000"></div><div class="a" style="left:528.0px;top:313.0px;width:5px;height:1px;background:#18f0f0"></div><div class="a" style="left:528.0px;top:313.0px;width:1px;height:5px;background:#18f0f0"></div><div class="a" style="left:529.0px;top:314.0px;width:3px;height:3px;background:#00c8c8"></div><div class="a" style="left:528.0px;top:313.0px;width:1px;height:1px;background:#e8f8f8"></div><div class="a" style="left:586.0px;top:194.0px;width:7px;height:7px;background:#000"></div><div class="a" style="left:587.0px;top:195.0px;width:5px;height:1px;background:#18f0f0"></div><div class="a" style="left:587.0px;top:195.0px;width:1px;height:5px;background:#18f0f0"></div><div class="a" style="left:588.0px;top:196.0px;width:3px;height:3px;background:#00c8c8"></div><div class="a" style="left:587.0px;top:195.0px;width:1px;height:1px;background:#e8f8f8"></div><div class="a" style="left:586.0px;top:253.0px;width:7px;height:7px;background:#000"></div><div class="a" style="left:587.0px;top:254.0px;width:5px;height:1px;background:#18f0f0"></div><div class="a" style="left:587.0px;top:254.0px;width:1px;height:5px;background:#18f0f0"></div><div class="a" style="left:588.0px;top:255.0px;width:3px;height:3px;background:#00c8c8"></div><div class="a" style="left:587.0px;top:254.0px;width:1px;height:1px;background:#e8f8f8"></div><div class="a" style="left:586.0px;top:312.0px;width:7px;height:7px;background:#000"></div><div class="a" style="left:587.0px;top:313.0px;width:5px;height:1px;background:#18f0f0"></div><div class="a" style="left:587.0px;top:313.0px;width:1px;height:5px;background:#18f0f0"></div><div class="a" style="left:588.0px;top:314.0px;width:3px;height:3px;background:#00c8c8"></div><div class="a" style="left:587.0px;top:313.0px;width:1px;height:1px;background:#e8f8f8"></div><div class="a" style="left:907px;top:114px;width:15px;height:477px;background:#c3d3cc;border:1px solid #8ea69c;border-radius:3px"></div><div class="a" style="left:908px;top:127px;width:13px;height:106px;background:#c3d3cc"></div><div class="a" style="left:907px;top:233px;width:15px;height:223px;background:linear-gradient(90deg,#dff2e8 0,#dff2e8 45%,#bfe3d0 50%,#b8e0cc 100%);border:1px solid #6fae8e;box-shadow:inset 1px 1px 0 #f4fbf7,inset -1px -1px 0 #e4f4ec"></div><svg style="left:911px;top:340px;" width="7" height="8" viewBox="0 0 7 8"><path d="M1 1.5H6M1 4.5H6M1 7.5H6" stroke="#6fae8e"/></svg><div class="a" style="left:907px;top:114px;width:15px;height:13px;background:linear-gradient(90deg,#e6ecea 0,#f4f7f6 55%,#d4ddd9 60%,#e2e8e5 100%);border:1px solid #8ea69c;border-radius:3px"></div><svg style="left:910.5px;top:117.5px;" width="8" height="5" viewBox="0 0 8 5"><path d="M0 4.5H8L4 0Z" fill="#000"/></svg><div class="a" style="left:907px;top:562px;width:15px;height:15px;background:linear-gradient(90deg,#e6ecea 0,#f4f7f6 55%,#d4ddd9 60%,#e2e8e5 100%);border:1px solid #8ea69c;border-radius:3px"></div><svg style="left:910.5px;top:566.5px;" width="8" height="5" viewBox="0 0 8 5"><path d="M0 4.5H8L4 0Z" fill="#000"/></svg><div class="a" style="left:907px;top:577px;width:15px;height:14px;background:linear-gradient(90deg,#e6ecea 0,#f4f7f6 55%,#d4ddd9 60%,#e2e8e5 100%);border:1px solid #8ea69c;border-radius:3px"></div><svg style="left:910.5px;top:582.0px;" width="8" height="5" viewBox="0 0 8 5"><path d="M0 0H8L4 4.5Z" fill="#000"/></svg><div class="a" style="left:248px;top:591px;width:675px;height:15px;background:#e3eae7"></div><div class="a" style="left:249px;top:591px;width:14px;height:15px;background:linear-gradient(#eef3f1,#dae3df);border:1px solid #8ea69c;border-radius:3px"></div><div class="a" style="left:264px;top:591px;width:14px;height:15px;background:linear-gradient(#eef3f1,#dae3df);border:1px solid #8ea69c;border-radius:3px"></div><div class="a" style="left:279px;top:591px;width:14px;height:15px;background:linear-gradient(#eef3f1,#dae3df);border:1px solid #8ea69c;border-radius:3px"></div><div class="a" style="left:294px;top:591px;width:14px;height:15px;background:linear-gradient(#eef3f1,#dae3df);border:1px solid #8ea69c;border-radius:3px"></div><svg style="left:252px;top:594px;" width="9" height="9" viewBox="0 0 9 9"><path d="M1.5 1V8" stroke="#a8b4ae" stroke-width="1.4"/><path d="M7.5 1V8L2.5 4.5Z" fill="#a8b4ae"/></svg><svg style="left:268px;top:594px;" width="9" height="9" viewBox="0 0 9 9"><path d="M6 1V8L1.5 4.5Z" fill="#a8b4ae"/></svg><svg style="left:282px;top:594px;" width="9" height="9" viewBox="0 0 9 9"><path d="M2.5 1V8L7 4.5Z" fill="#000"/></svg><svg style="left:297px;top:594px;" width="9" height="9" viewBox="0 0 9 9"><path d="M1.5 1V8L6 4.5Z" fill="#000"/><path d="M7.2 1V8" stroke="#000" stroke-width="1.4"/></svg><svg style="left:308px;top:590px;" width="292" height="17" viewBox="0 0 292 17"><path d="M86 1.5H244L239.5 15H81.5Z" fill="#dde5e1" stroke="#111" stroke-width="1"/>
<path d="M244 1.5H284V15H239.5Z" fill="#dde5e1" stroke="#111" stroke-width="1"/>
<path d="M0.5 1L7 15H81L86 1" fill="#fff" stroke="#111" stroke-width="1"/>
<path d="M7 15.2H289" stroke="#000" stroke-width="1.3"/>
<path d="M289 1V15.5" stroke="#000" stroke-width="1.2"/></svg><span class="t" style="left:317.5px;top:592px;font-size:12.5px;line-height:12.5px;font-weight:700;color:#000;transform:scaleX(1.1937);">Разметка</span><span class="t" style="left:398.5px;top:592px;font-size:12.5px;line-height:12.5px;font-weight:400;color:#555;transform:scaleX(1.0788);">Элементы управления</span><span class="t" style="left:560.5px;top:592px;font-size:12.5px;line-height:12.5px;font-weight:400;color:#555;transform:scaleX(1.3075);clip-path:inset(0 13% 0 0)">Разм</span><div class="a" style="left:598px;top:591px;width:309px;height:15px;background:#c3d3cc;border:1px solid #8ea69c;border-radius:3px"></div><div class="a" style="left:598px;top:591px;width:15px;height:15px;background:linear-gradient(90deg,#e6ecea 0,#f4f7f6 55%,#d4ddd9 60%,#e2e8e5 100%);border:1px solid #8ea69c;border-radius:3px"></div><svg style="left:602.5px;top:594.5px;" width="5" height="8" viewBox="0 0 5 8"><path d="M4.5 0V8L0 4Z" fill="#000"/></svg><div class="a" style="left:656px;top:591px;width:179px;height:15px;background:linear-gradient(#dff2e8 0,#dff2e8 45%,#bfe3d0 50%,#b8e0cc 100%);border:1px solid #6fae8e;box-shadow:inset 1px 1px 0 #f4fbf7,inset -1px -1px 0 #e4f4ec"></div><svg style="left:742px;top:596px;" width="7" height="6" viewBox="0 0 7 6"><path d="M.5 0V6M3.5 0V6M6.5 0V6" stroke="#6fae8e"/></svg><div class="a" style="left:877px;top:591px;width:15px;height:15px;background:linear-gradient(90deg,#e6ecea 0,#f4f7f6 55%,#d4ddd9 60%,#e2e8e5 100%);border:1px solid #8ea69c;border-radius:3px"></div><svg style="left:881.5px;top:594.5px;" width="5" height="8" viewBox="0 0 5 8"><path d="M4.5 0V8L0 4Z" fill="#000"/></svg><div class="a" style="left:892px;top:591px;width:15px;height:15px;background:linear-gradient(90deg,#e6ecea 0,#f4f7f6 55%,#d4ddd9 60%,#e2e8e5 100%);border:1px solid #8ea69c;border-radius:3px"></div><svg style="left:897.5px;top:594.5px;" width="5" height="8" viewBox="0 0 5 8"><path d="M0 0V8L4.5 4Z" fill="#000"/></svg><div class="a" style="left:6px;top:615px;width:1px;height:1px;background:#7d958d"></div><div class="a" style="left:7px;top:616px;width:1px;height:1px;background:#fbfdfc"></div><div class="a" style="left:9px;top:615px;width:1px;height:1px;background:#7d958d"></div><div class="a" style="left:10px;top:616px;width:1px;height:1px;background:#fbfdfc"></div><div class="a" style="left:6px;top:618px;width:1px;height:1px;background:#7d958d"></div><div class="a" style="left:7px;top:619px;width:1px;height:1px;background:#fbfdfc"></div><div class="a" style="left:9px;top:618px;width:1px;height:1px;background:#7d958d"></div><div class="a" style="left:10px;top:619px;width:1px;height:1px;background:#fbfdfc"></div><div class="a" style="left:6px;top:621px;width:1px;height:1px;background:#7d958d"></div><div class="a" style="left:7px;top:622px;width:1px;height:1px;background:#fbfdfc"></div><div class="a" style="left:9px;top:621px;width:1px;height:1px;background:#7d958d"></div><div class="a" style="left:10px;top:622px;width:1px;height:1px;background:#fbfdfc"></div><div class="a" style="left:6px;top:624px;width:1px;height:1px;background:#7d958d"></div><div class="a" style="left:7px;top:625px;width:1px;height:1px;background:#fbfdfc"></div><div class="a" style="left:9px;top:624px;width:1px;height:1px;background:#7d958d"></div><div class="a" style="left:10px;top:625px;width:1px;height:1px;background:#fbfdfc"></div><div class="a" style="left:6px;top:627px;width:1px;height:1px;background:#7d958d"></div><div class="a" style="left:7px;top:628px;width:1px;height:1px;background:#fbfdfc"></div><div class="a" style="left:9px;top:627px;width:1px;height:1px;background:#7d958d"></div><div class="a" style="left:10px;top:628px;width:1px;height:1px;background:#fbfdfc"></div><div class="a" style="left:6px;top:630px;width:1px;height:1px;background:#7d958d"></div><div class="a" style="left:7px;top:631px;width:1px;height:1px;background:#fbfdfc"></div><div class="a" style="left:9px;top:630px;width:1px;height:1px;background:#7d958d"></div><div class="a" style="left:10px;top:631px;width:1px;height:1px;background:#fbfdfc"></div><div class="a" style="left:16px;top:610px;width:25px;height:27px;background:#b3c3bc;border:1px solid #8ea69c;border-radius:3px"></div><svg style="left:24px;top:615px;" width="10" height="16" viewBox="0 0 10 16"><path d="M1 1V12L3.8 9.5L6 14.5L8 13.5L6 8.8H9.8Z" fill="#fff" stroke="#000" stroke-width="1.1" stroke-linejoin="round"/></svg><div class="a" style="left:44px;top:616px;width:1px;height:15px;background:#c3ccc8"></div><svg style="left:53px;top:615px;" width="16" height="16" viewBox="0 0 16 16"><path d="M1 15L15 1" stroke="#111" stroke-width="1.3"/></svg><svg style="left:79px;top:619px;" width="14" height="8" viewBox="0 0 14 8"><path d="M1 4H9" stroke="#000" stroke-width="1.6"/><path d="M8 0.5L13.5 4L8 7.5Z" fill="#000"/></svg><svg style="left:102px;top:616px;" width="16" height="13" viewBox="0 0 16 13"><defs><linearGradient id="g1" x1="0" y1="0" x2="1" y2="1"><stop offset="0" stop-color="#f4f4f4"/><stop offset="1" stop-color="#b4b4b4"/></linearGradient></defs><rect x="1.5" y="1.5" width="13" height="10" rx="1" fill="url(#g1)" stroke="#858585"/></svg><svg style="left:127px;top:616px;" width="17" height="13" viewBox="0 0 17 13"><ellipse cx="8.5" cy="6.5" rx="7.2" ry="5" fill="url(#g1)" stroke="#858585"/></svg><svg style="left:153px;top:615px;" width="16" height="17" viewBox="0 0 16 17"><path d="M1 1H15V5.5H14C13.5 3.5 12.5 3 10 3V14C10 15 11 15 12 15.2V16H4V15.2C5 15 6 15 6 14V3C3.5 3 2.5 3.5 2 5.5H1Z" fill="#1e1608" stroke="#6a5020" stroke-width=".5"/></svg><div class="a" style="left:177px;top:616px;width:1px;height:15px;background:#c3ccc8"></div><svg style="left:184px;top:615px;" width="18" height="16" viewBox="0 0 18 16"><defs><linearGradient id="gc" x1="0" y1="0" x2="1" y2="0"><stop offset="0" stop-color="#8aa8d4"/><stop offset="1" stop-color="#c8d8ec"/></linearGradient></defs>
<path d="M1.4 1.5C3 1.8 5.5 3.5 5.5 5.5C5.5 7.5 4 9 5 10.5C6 12 8 12.8 9 12.8H1.4Z" fill="url(#gc)"/>
<path d="M1.4 1.5C3 1.8 5.5 3.5 5.5 5.5C5.5 7.5 4 9 5 10.5C6 12 8 12.8 9.5 12.8" fill="none" stroke="#000" stroke-width="1"/>
<path d="M9.8 12L16.3 6" stroke="#000" stroke-width="3.4" stroke-linecap="round"/><path d="M10.3 11.5L16 6.3" stroke="#f0c830" stroke-width="1.6"/></svg><svg style="left:209px;top:621px;" width="6" height="4" viewBox="0 0 6 4"><path d="M0 0H6L3 3.5Z" fill="#000"/></svg><svg style="left:220px;top:615px;" width="17" height="16" viewBox="0 0 17 16"><circle cx="3" cy="3" r="1.8" fill="#fff" stroke="#000" stroke-width="1"/>
<path d="M4.8 3H7.2V13H12.2" stroke="#000" stroke-width="1.2" fill="none"/>
<circle cx="14" cy="13" r="1.8" fill="#fff" stroke="#000" stroke-width="1"/></svg><svg style="left:245px;top:621px;" width="6" height="4" viewBox="0 0 6 4"><path d="M0 0H6L3 3.5Z" fill="#000"/></svg><svg style="left:256px;top:620px;" width="17" height="6" viewBox="0 0 17 6"><path d="M1 3H12" stroke="#555" stroke-width="1.5"/><path d="M11 0.5L16 3L11 5.5Z" fill="#555"/></svg><svg style="left:281px;top:621px;" width="6" height="4" viewBox="0 0 6 4"><path d="M0 0H6L3 3.5Z" fill="#000"/></svg><svg style="left:293px;top:615px;" width="16" height="16" viewBox="0 0 16 16"><path d="M8 1.5L14.5 8L8 14.5L1.5 8Z" fill="url(#g1)" stroke="#858585"/></svg><svg style="left:317px;top:621px;" width="6" height="4" viewBox="0 0 6 4"><path d="M0 0H6L3 3.5Z" fill="#000"/></svg><svg style="left:328px;top:615px;" width="17" height="17" viewBox="0 0 17 17"><defs><radialGradient id="g2" cx=".4" cy=".35" r=".7"><stop offset="0" stop-color="#f6f6f6"/><stop offset="1" stop-color="#b8b8b8"/></radialGradient></defs>
<circle cx="8.5" cy="8" r="7.2" fill="url(#g2)" stroke="#8a8a8a"/>
<path d="M5 9.5C6.5 11.5 10.5 11.5 12 9.5" stroke="#fff" fill="none"/></svg><svg style="left:353px;top:621px;" width="6" height="4" viewBox="0 0 6 4"><path d="M0 0H6L3 3.5Z" fill="#000"/></svg><svg style="left:364px;top:617px;" width="18" height="12" viewBox="0 0 18 12"><path d="M1 5.5L5 1.5V3.8H12V1.5L16.5 5.5L12 9.5V7.2H5V9.5Z" fill="url(#g1)" stroke="#858585"/></svg><svg style="left:389px;top:621px;" width="6" height="4" viewBox="0 0 6 4"><path d="M0 0H6L3 3.5Z" fill="#000"/></svg><svg style="left:400px;top:614px;" width="18" height="18" viewBox="0 0 18 18"><rect x="1.5" y="1.5" width="15" height="15" rx="2" fill="url(#g1)" stroke="#858585"/><path d="M2 5H16M8 5V16" stroke="#c8c8c8" stroke-width=".8"/></svg><svg style="left:425px;top:621px;" width="6" height="4" viewBox="0 0 6 4"><path d="M0 0H6L3 3.5Z" fill="#000"/></svg><svg style="left:436px;top:615px;" width="18" height="17" viewBox="0 0 18 17"><path d="M2.5 1.5H15C15.8 1.5 16.5 2.2 16.5 3V9.5C16.5 10.3 15.8 11 15 11H7L1 15L4 11H2.5C1.7 11 1 10.3 1 9.5V3C1 2.2 1.7 1.5 2.5 1.5Z" fill="url(#g1)" stroke="#858585"/></svg><svg style="left:461px;top:621px;" width="6" height="4" viewBox="0 0 6 4"><path d="M0 0H6L3 3.5Z" fill="#000"/></svg><svg style="left:472px;top:614px;" width="18" height="18" viewBox="0 0 18 18"><path d="M9 1L11.2 6.5L17 6.8L12.5 10.5L14 16.5L9 13.2L4 16.5L5.5 10.5L1 6.8L6.8 6.5Z" fill="#d8d8d8" stroke="#7a7a7a" stroke-width="1.1"/></svg><svg style="left:497px;top:621px;" width="6" height="4" viewBox="0 0 6 4"><path d="M0 0H6L3 3.5Z" fill="#000"/></svg><div class="a" style="left:509px;top:616px;width:1px;height:15px;background:#c3ccc8"></div><svg style="left:518px;top:614px;" width="16" height="17" viewBox="0 0 16 17"><path d="M2.5 4.5L12.5 2.5L12.5 10.5L6.5 14.5Z" fill="none" stroke="#000" stroke-width=".9"/>
<rect x="1" y="3" width="3" height="3" fill="#fff" stroke="#000"/><rect x="11" y="1" width="3" height="3" fill="#fff" stroke="#000"/>
<rect x="11" y="9" width="3" height="3" fill="#fff" stroke="#000"/><rect x="5" y="13" width="3" height="3" fill="#fff" stroke="#000"/></svg><svg style="left:544px;top:614px;" width="16" height="17" viewBox="0 0 16 17"><path d="M9.5 3.5L12.5 0.8L15.5 3.8L12.8 6.8Z" fill="#e0b040" stroke="#3a2a10" stroke-width=".9"/>
<path d="M5.5 7.5L9.5 3.5L12.8 6.8L8.8 10.8Z" fill="#d8b060" stroke="#2a1a08" stroke-width=".9"/>
<path d="M6.3 7.6L8.7 10" stroke="#d02010" stroke-width="1.6"/>
<path d="M5.5 7.5L8.8 10.8L3.5 13.5L2.8 12.8Z" fill="#e8e8e8" stroke="#222" stroke-width=".9"/>
<circle cx="2.3" cy="15" r="1.4" fill="#3a6aa8"/></svg><div class="a" style="left:567px;top:616px;width:1px;height:15px;background:#c3ccc8"></div><svg style="left:575px;top:614px;" width="17" height="17" viewBox="0 0 17 17"><path d="M5 5L8.5 1.5L12 5" fill="none" stroke="#222" stroke-width=".8"/><path d="M8.5 0.3L9.7 1.5L8.5 2.7L7.3 1.5Z" fill="#fff" stroke="#222" stroke-width=".6"/>
<rect x="2.5" y="5.5" width="12" height="9.5" fill="#e4e4e4" stroke="#8a6a50" stroke-width="1.6"/>
<path d="M6 12.5V9.5C6 8 11 8 11 9.5V12.5M6 10.8H11" fill="none" stroke="#000" stroke-width="1.3"/></svg><svg style="left:600px;top:614px;" width="17" height="17" viewBox="0 0 17 17"><path d="M1.5 1.5H15.5V15.5H1.5Z" fill="none" stroke="#999" stroke-width=".8" stroke-dasharray="1 1.5"/>
<rect x="0.5" y="0.5" width="2" height="2" fill="#333"/><rect x="14.5" y="0.5" width="2" height="2" fill="#333"/><rect x="0.5" y="14.5" width="2" height="2" fill="#333"/><rect x="14.5" y="14.5" width="2" height="2" fill="#333"/>
<circle cx="11" cy="5.5" r="3.3" fill="#f8d838" stroke="#c8a000" stroke-width=".6"/>
<rect x="3" y="6" width="7" height="5.5" fill="#e01010" stroke="#900" stroke-width=".5"/>
<path d="M9.5 5.5L13.5 14H5.5Z" fill="#2a5aa8" stroke="#1a3a80" stroke-width=".5"/></svg><svg style="left:625px;top:614px;" width="19" height="18" viewBox="0 0 19 18"><rect x="1.5" y="1.5" width="10.5" height="11" rx="2" fill="#fff" stroke="#444" stroke-width="1"/><rect x="3.5" y="3.5" width="6.5" height="7" fill="#c89060" stroke="#666" stroke-width=".5"/><circle cx="5" cy="5.5" r="1" fill="#80c040"/>
<rect x="7" y="5.5" width="10.5" height="11.5" rx="2" fill="#fff" stroke="#444" stroke-width="1"/><rect x="9" y="7.5" width="6.5" height="7.5" fill="#d09860" stroke="#666" stroke-width=".5"/><circle cx="10.8" cy="9.5" r="1" fill="#80c040"/><path d="M9 13L11.5 11.5L15.5 14V15H9Z" fill="#c04030"/></svg><div class="a" style="left:650px;top:616px;width:1px;height:15px;background:#c3ccc8"></div><svg style="left:657px;top:614px;" width="20" height="18" viewBox="0 0 20 18"><path d="M6.5 3.5L15 12L9 17L1 9Z" fill="#8a94a0" stroke="#222" stroke-width="1"/>
<path d="M2.5 9L6.5 5L13 11.5" fill="none" stroke="#c8d0d8" stroke-width="1"/>
<path d="M12 1.5C14 1.5 15.5 2.5 15.5 4.5" stroke="#000" stroke-width="1" fill="none"/><path d="M13.5 4L15.5 6.5L17.5 4Z" fill="#000"/></svg><svg style="left:682px;top:621px;" width="6" height="4" viewBox="0 0 6 4"><path d="M0 0H6L3 3.5Z" fill="#000"/></svg><svg style="left:694px;top:615px;" width="18" height="16" viewBox="0 0 18 16"><path d="M1.5 1V15" stroke="#000" stroke-width="1.6"/>
<rect x="3.5" y="2.5" width="12.5" height="4.5" fill="#8cbc60" stroke="#4a7a30" stroke-width="1"/>
<rect x="3.5" y="8.5" width="7.5" height="4.5" fill="#6a98d0" stroke="#2a5890" stroke-width="1"/></svg><svg style="left:718px;top:621px;" width="6" height="4" viewBox="0 0 6 4"><path d="M0 0H6L3 3.5Z" fill="#000"/></svg><svg style="left:729px;top:614px;" width="19" height="17" viewBox="0 0 19 17"><rect x="1" y="3" width="14" height="13" fill="#cfd3d1" stroke="#a0a4a2" stroke-width=".8"/>
<rect x="3.5" y="1.5" width="13" height="13" fill="#86b450" stroke="#4a7a28" stroke-width="1"/></svg><svg style="left:754px;top:621px;" width="6" height="4" viewBox="0 0 6 4"><path d="M0 0H6L3 3.5Z" fill="#000"/></svg><div class="a" style="left:766px;top:616px;width:1px;height:15px;background:#c3ccc8"></div><svg style="left:774px;top:614px;" width="18" height="17" viewBox="0 0 18 17"><path d="M3.5 2.5C3.5 1.5 4.5 1 5.5 1H13.5C15 1 16.5 2 16.5 3.5V14C16.5 15 15.5 15.5 14.5 15.5H4.5C3.5 15.5 3.5 14.5 3.5 14Z" fill="#4a72a0" stroke="#1a3050" stroke-width="1"/>
<path d="M4 3.5H16" stroke="#8ab0d8" stroke-width="1"/>
<path d="M1 10.5H5V8L9 11.5L5 15V12.5H1Z" fill="#9ad040" stroke="#2a4a10" stroke-width=".8"/></svg><div class="a" style="left:802px;top:611px;width:10px;height:25px;background:linear-gradient(#e2e9e6,#b9c4bf)"></div><svg style="left:804px;top:628px;" width="6" height="4" viewBox="0 0 6 4"><path d="M0 0H6L3 3.5Z" fill="#000"/></svg><div class="a" style="left:9px;top:641px;width:292px;height:17px;border-top:1px solid #9aa6a0;border-left:1px solid #9aa6a0;border-bottom:1px solid #fafcfb;border-right:1px solid #fafcfb"></div><div class="a" style="left:301px;top:641px;width:216px;height:17px;border-top:1px solid #9aa6a0;border-left:1px solid #9aa6a0;border-bottom:1px solid #fafcfb;border-right:1px solid #fafcfb"></div><div class="a" style="left:521px;top:641px;width:45px;height:17px;border-top:1px solid #9aa6a0;border-left:1px solid #9aa6a0;border-bottom:1px solid #fafcfb;border-right:1px solid #fafcfb"></div><div class="a" style="left:570px;top:641px;width:23px;height:17px;border-top:1px solid #9aa6a0;border-left:1px solid #9aa6a0;border-bottom:1px solid #fafcfb;border-right:1px solid #fafcfb"></div><div class="a" style="left:597px;top:641px;width:25px;height:17px;border-top:1px solid #9aa6a0;border-left:1px solid #9aa6a0;border-bottom:1px solid #fafcfb;border-right:1px solid #fafcfb"></div><div class="a" style="left:626px;top:641px;width:293px;height:17px;border-top:1px solid #9aa6a0;border-left:1px solid #9aa6a0;border-bottom:1px solid #fafcfb;border-right:1px solid #fafcfb"></div><div class="a" style="left:763px;top:642px;width:1px;height:15px;background:#9aa6a0"></div><span class="t" style="left:14px;top:644px;font-size:12.5px;line-height:12.5px;font-weight:400;color:#111;transform:scaleX(1.1568);">Фигура</span><svg style="left:306px;top:642px;" width="16" height="13" viewBox="0 0 16 13"><path d="M4.5 1V10M1 5.5H9" stroke="#1010c8" stroke-width="1.2" stroke-dasharray="2 1"/>
<path d="M10.5 5.5H15M14.5 5.5V11.5M4.5 11.5H15" stroke="#000" stroke-width="1" stroke-dasharray="1 1"/></svg><span class="t" style="left:327px;top:644px;font-size:12.5px;line-height:12.5px;font-weight:400;color:#111;transform:scaleX(1.1510);">1,50 / 2,50</span><svg style="left:412px;top:642px;" width="17" height="14" viewBox="0 0 17 14"><path d="M7.5 5.5H16M15.5 5.5V12M7.5 11.5H16M7.5 5.5V12" stroke="#000" stroke-width="1" stroke-dasharray="1 1"/>
<path d="M7 1.5L9 2.5L7 3.5M10 1.5L8.5 2.5L10 3.5M13 1.5L14.5 2.5L13 3.5M16 1.5L14.5 2.5L16 3.5M3.5 5.5L2.5 7L3.5 8M3.5 10L2.5 11L3.5 12" stroke="#000" stroke-width="1.1" fill="none"/></svg><span class="t" style="left:434.5px;top:644px;font-size:12.5px;line-height:12.5px;font-weight:400;color:#111;transform:scaleX(1.1235);">8,00 x 8,00</span><span class="t" style="left:530.5px;top:644px;font-size:12.5px;line-height:12.5px;font-weight:400;color:#111;transform:scaleX(1.0587);">39%</span><span class="t" style="left:579px;top:642px;font-size:12.5px;line-height:12.5px;font-weight:400;color:#111;transform:scaleX(1.2308);">*</span><span class="t" style="left:630.5px;top:644px;font-size:12.5px;line-height:12.5px;font-weight:400;color:#111;transform:scaleX(1.1359);">Слайд 1 / 1 (Разметка)</span><span class="t" style="left:769px;top:644px;font-size:12.5px;line-height:12.5px;font-weight:400;color:#111;transform:scaleX(1.0317);">Обычный</span><div class="a" style="left:305px;top:105px;width:174px;height:124px;background:#000"></div><div class="a" style="left:305px;top:105px;width:173px;height:123px;background:#fff;border-left:1px solid #c8d0cc;border-top:1px solid #e0e6e3"></div><div class="a" style="left:307px;top:121px;width:155px;height:15px;background:#b4e2cb"></div><div class="a" style="left:309px;top:108px;width:19px;height:12px;background:#2200d8;border:1px solid #000"></div><span class="t" style="left:333px;top:108px;font-size:12.5px;line-height:12.5px;font-weight:400;color:#111;transform:scaleX(1.0991);">Синий 3</span><div class="a" style="left:309px;top:123px;width:19px;height:12px;background:#2424d0;border:1px solid #000"></div><span class="t" style="left:333px;top:123px;font-size:12.5px;line-height:12.5px;font-weight:400;color:#111;transform:scaleX(1.0991);">Синий 4</span><div class="a" style="left:309px;top:138px;width:19px;height:12px;background:#0a32ff;border:1px solid #000"></div><span class="t" style="left:333px;top:138px;font-size:12.5px;line-height:12.5px;font-weight:400;color:#111;transform:scaleX(1.0991);">Синий 5</span><div class="a" style="left:309px;top:153px;width:19px;height:12px;background:#0a84f4;border:1px solid #000"></div><span class="t" style="left:333px;top:153px;font-size:12.5px;line-height:12.5px;font-weight:400;color:#111;transform:scaleX(1.0991);">Синий 6</span><div class="a" style="left:309px;top:168px;width:19px;height:12px;background:#0aaaf4;border:1px solid #000"></div><span class="t" style="left:333px;top:168px;font-size:12.5px;line-height:12.5px;font-weight:400;color:#111;transform:scaleX(1.0991);">Синий 7</span><div class="a" style="left:309px;top:183px;width:19px;height:12px;background:#a8ccfa;border:1px solid #000"></div><span class="t" style="left:333px;top:183px;font-size:12.5px;line-height:12.5px;font-weight:400;color:#111;transform:scaleX(1.0991);">Синий 8</span><div class="a" style="left:309px;top:198px;width:19px;height:12px;background:#00d8f4;border:1px solid #000"></div><span class="t" style="left:333px;top:198px;font-size:12.5px;line-height:12.5px;font-weight:400;color:#111;transform:scaleX(1.0896);">Бирюзовый 1</span><div class="a" style="left:309px;top:213px;width:19px;height:12px;background:#00c4c4;border:1px solid #000"></div><span class="t" style="left:333px;top:213px;font-size:12.5px;line-height:12.5px;font-weight:400;color:#111;transform:scaleX(1.1026);">Бирюзовый 2</span><div class="a" style="left:462px;top:107px;width:15px;height:120px;background:#c3d3cc;border:1px solid #8ea69c;border-radius:3px"></div><div class="a" style="left:462px;top:107px;width:15px;height:14px;background:linear-gradient(90deg,#e6ecea 0,#f4f7f6 55%,#d4ddd9 60%,#e2e8e5 100%);border:1px solid #8ea69c;border-radius:3px"></div><svg style="left:465.5px;top:111.0px;" width="8" height="5" viewBox="0 0 8 5"><path d="M0 4.5H8L4 0Z" fill="#000"/></svg><div class="a" style="left:462px;top:148px;width:15px;height:16px;background:linear-gradient(90deg,#dff2e8 0,#dff2e8 45%,#bfe3d0 50%,#b8e0cc 100%);border:1px solid #6fae8e;box-shadow:inset 1px 1px 0 #f4fbf7,inset -1px -1px 0 #e4f4ec"></div><div class="a" style="left:462px;top:197px;width:15px;height:15px;background:linear-gradient(90deg,#e6ecea 0,#f4f7f6 55%,#d4ddd9 60%,#e2e8e5 100%);border:1px solid #8ea69c;border-radius:3px"></div><svg style="left:465.5px;top:201.5px;" width="8" height="5" viewBox="0 0 8 5"><path d="M0 4.5H8L4 0Z" fill="#000"/></svg><div class="a" style="left:462px;top:212px;width:15px;height:15px;background:linear-gradient(90deg,#e6ecea 0,#f4f7f6 55%,#d4ddd9 60%,#e2e8e5 100%);border:1px solid #8ea69c;border-radius:3px"></div><svg style="left:465.5px;top:217.5px;" width="8" height="5" viewBox="0 0 8 5"><path d="M0 0H8L4 4.5Z" fill="#000"/></svg><svg style="left:0px;top:0px;" width="30" height="5" viewBox="0 0 30 5"><path d="M2.5 4.5C2.5 2 3.5 0.8 5.5 0.8C7.5 0.8 8 2.5 8 4.5Z" fill="#3a78e0"/>
<path d="M11 0H21.5L24 4.5H13Z" fill="#3c7ce8"/><path d="M21 0H22.5L24.5 4.5H23Z" fill="#0a2a90"/></svg><div class="a" style="left:928px;top:0;width:10px;height:666px;overflow:hidden"><div class="a" style="left:-928px;top:0;width:938px;height:666px"><svg style="left:928px;top:108px;" width="10" height="50" viewBox="0 0 10 50"><path d="M10 2L5 16H10Z" fill="#fff"/><path d="M10 2L4.5 17" stroke="#a0a8a8" stroke-width=".8"/>
<path d="M0 17L10 15V46L0 47Z" fill="#2a7cec"/>
<path d="M0 21L10 19V31L0 33Z" fill="#b8d4f4"/>
<path d="M0 27L10 25V31L0 33Z" fill="#8cb8f0"/>
<path d="M0 40L10 39V46L0 47Z" fill="#1a5cd0"/></svg><span class="t" style="left:924px;top:162px;font-size:12.5px;line-height:12.5px;font-weight:400;color:#111;">hir</span><div class="a" style="left:928px;top:231px;width:10px;height:44px;background:#fafafa"></div><div class="a" style="left:930px;top:236px;width:8px;height:1px;background:#c8c8c8"></div><div class="a" style="left:930px;top:240px;width:8px;height:4px;background:#999"></div><div class="a" style="left:930px;top:246px;width:8px;height:1px;background:#d8d8d8"></div><div class="a" style="left:930px;top:248px;width:8px;height:1px;background:#d8d8d8"></div><div class="a" style="left:930px;top:254px;width:8px;height:17px;background:linear-gradient(#c8c8f4,#8888d8)"></div><div class="a" style="left:928px;top:275px;width:10px;height:2px;background:#2a6a6a"></div><div class="a" style="left:928px;top:277px;width:10px;height:73px;background:#4ccccc"></div><span class="t" style="left:929px;top:281px;font-size:12.5px;line-height:12.5px;font-weight:400;color:#111;">rr</span><span class="t" style="left:930px;top:296px;font-size:12.5px;line-height:12.5px;font-weight:400;color:#111;">d</span><div class="a" style="left:928px;top:350px;width:10px;height:42px;background:#fafafa"></div><div class="a" style="left:930px;top:355px;width:8px;height:1px;background:#c8c8c8"></div><div class="a" style="left:930px;top:359px;width:8px;height:4px;background:#999"></div><div class="a" style="left:930px;top:365px;width:8px;height:1px;background:#d8d8d8"></div><div class="a" style="left:930px;top:375px;width:8px;height:15px;background:linear-gradient(#c8c8f4,#8888d8)"></div><div class="a" style="left:928px;top:392px;width:10px;height:2px;background:#2a6a6a"></div><div class="a" style="left:928px;top:394px;width:10px;height:272px;background:linear-gradient(#4ccccc,#62d6d6)"></div><div class="a" style="left:928px;top:399px;width:10px;height:1px;background:repeating-linear-gradient(90deg,#e03030 0 1px,transparent 1px 2px)"></div><div class="a" style="left:928px;top:441px;width:10px;height:1px;background:repeating-linear-gradient(90deg,#e03030 0 1px,transparent 1px 2px)"></div><span class="t" style="left:924px;top:402px;font-size:12.5px;line-height:12.5px;font-weight:400;color:#111;">то</span><span class="t" style="left:930px;top:413px;font-size:12.5px;line-height:12.5px;font-weight:400;color:#111;">п</span><span class="t" style="left:924px;top:424px;font-size:12.5px;line-height:12.5px;font-weight:400;color:#111;">уг</span></div></div><div class="a" style="left:781px;top:664px;width:6px;height:2px;background:#2a6ab8"></div><div class="a" style="left:795px;top:663px;width:95px;height:3px;background:#2a6ab8"></div><svg style="left:822px;top:663px;" width="12" height="3" viewBox="0 0 12 3"><path d="M3 0H12V3H0Z" fill="#fff"/></svg><div class="a" style="left:890px;top:663px;width:2px;height:3px;background:#e03030"></div><div class="a" style="left:897px;top:664px;width:8px;height:2px;background:#2a6ab8"></div><svg style="left:240px;top:340px;" width="6" height="38" viewBox="0 0 6 38"><path d="M3 1L5 4H1Z" fill="#111"/><path d="M3 37L5 34H1Z" fill="#111"/>
<path d="M3 7V31" stroke="#333" stroke-width="1" stroke-dasharray="1 2"/></svg></body></html>
